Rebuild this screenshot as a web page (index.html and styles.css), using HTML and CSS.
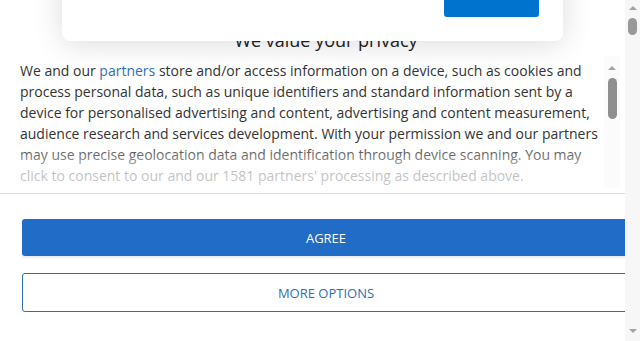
FILE: index.html
```html
<!DOCTYPE html>
<html lang="en">
<head>
<meta charset="utf-8">
<title>Privacy</title>
<link rel="stylesheet" href="styles.css">
</head>
<body>
<div class="viewport">
  <div class="page">
    <div class="content">
      <h2 class="title">We value your privacy</h2>
      <div class="body-section">
        <div class="scrollbox">
          <div class="text-wrap">
            <p class="text">We and our <a class="link" href="#">partners</a> store and/or access information on a device, such as cookies and process personal data, such as unique identifiers and standard information sent by a device for personalised advertising and content, advertising and content measurement, audience research and services development. With your permission we and our partners may use precise geolocation data and identification through device scanning. You may click to consent to our and our 1581 partners' processing as described above.</p>
            <div class="fade"></div>
          </div>
          <div class="mini-scroll">
            <span class="tri-up"></span>
            <span class="mini-thumb"></span>
          </div>
        </div>
      </div>
      <div class="actions">
        <button class="btn btn-primary">AGREE</button>
        <button class="btn btn-secondary">MORE OPTIONS</button>
      </div>
    </div>
    <div class="top-card">
      <button class="card-btn"></button>
    </div>
  </div>
  <div class="scrollbar">
    <span class="tri-up"></span>
    <span class="thumb"></span>
    <span class="spacer"></span>
    <span class="tri-down"></span>
  </div>
</div>
</body>
</html>
```
FILE: styles.css
```css
html, body {
  margin: 0;
  padding: 0;
  height: 100%;
  overflow: hidden;
  background: #ffffff;
  font-family: "Open Sans", "Liberation Sans", sans-serif;
}

.viewport {
  display: flex;
  height: 341px;
}

.page {
  position: relative;
  width: 625px;
  flex: none;
  overflow: hidden;
}

.content {
  width: 652px;
}

.title {
  margin: 0;
  padding-top: 28px;
  font-size: 18px;
  line-height: 24px;
  font-weight: 500;
  color: #222222;
  text-align: center;
}

.body-section {
  margin-top: 4px;
  padding-bottom: 5px;
  border-bottom: 1px solid #dddddd;
}

.scrollbox {
  display: flex;
  margin-left: 20px;
  width: 600px;
  height: 132px;
  overflow: hidden;
}

.text-wrap {
  position: relative;
  flex: 1;
  padding-top: 4px;
}

.text {
  margin: 0;
  font-size: 14px;
  line-height: 21px;
  color: #333333;
}

.link {
  color: #2f6fb8;
  text-decoration: none;
}

.fade {
  position: absolute;
  left: 0;
  right: 0;
  bottom: 0;
  height: 44px;
  background: linear-gradient(to bottom, rgba(255,255,255,0) 0%, rgba(255,255,255,0.68) 60%, rgba(255,255,255,0.75) 100%);
}

.mini-scroll {
  flex: none;
  width: 16px;
  display: flex;
  flex-direction: column;
  align-items: center;
  padding-top: 10px;
  background: #fbfbfb;
}

.tri-up {
  width: 0;
  height: 0;
  border-left: 4px solid transparent;
  border-right: 4px solid transparent;
  border-bottom: 4px solid #a3a3a3;
}

.tri-down {
  width: 0;
  height: 0;
  border-left: 4px solid transparent;
  border-right: 4px solid transparent;
  border-top: 4px solid #a3a3a3;
}

.mini-thumb {
  margin-top: 8px;
  width: 9px;
  height: 41px;
  border-radius: 5px;
  background: #8f8f8f;
}

.actions {
  padding: 25px 22px 0;
  display: flex;
  flex-direction: column;
  gap: 17px;
}

.btn {
  display: block;
  width: 100%;
  margin: 0;
  font-family: "Open Sans", "Liberation Sans", sans-serif;
  font-size: 13px;
  letter-spacing: 0;
  border-radius: 3px;
  cursor: pointer;
}

.btn-primary {
  height: 37px;
  border: none;
  background: #206cc6;
  color: #ffffff;
  box-shadow: 0 2px 2px rgba(0, 0, 0, 0.08);
}

.btn-secondary {
  height: 39px;
  border: 1px solid #2f6fae;
  background: #ffffff;
  color: #2f6fb8;
}

.top-card {
  position: absolute;
  left: 62px;
  top: -60px;
  width: 501px;
  height: 101px;
  box-sizing: border-box;
  padding: 0 24px 24px;
  display: flex;
  justify-content: flex-end;
  align-items: flex-end;
  background: #ffffff;
  border-radius: 8px;
  box-shadow: 0 3px 30px rgba(0, 0, 0, 0.14);
}

.card-btn {
  width: 95px;
  height: 40px;
  border: none;
  border-radius: 3px;
  background: #0073cf;
}

.scrollbar {
  flex: none;
  width: 15px;
  height: 341px;
  box-sizing: border-box;
  display: flex;
  flex-direction: column;
  align-items: center;
  padding: 6px 0 8px;
  background: #f7f7f7;
}

.thumb {
  margin-top: 8px;
  width: 9px;
  height: 17px;
  border-radius: 5px;
  background: #999999;
}

.spacer {
  flex: 1;
}
```
